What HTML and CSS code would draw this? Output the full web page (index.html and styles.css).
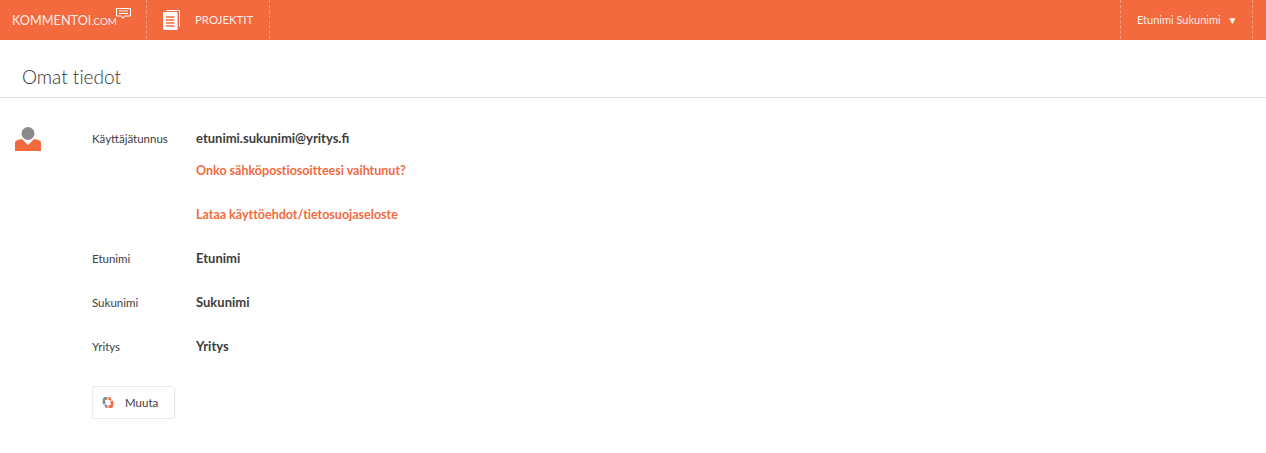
FILE: index.html
```html
<!DOCTYPE html>
<html lang="en">
<head>
    <meta charset="UTF-8">
    <title>Omat tiedot</title>
    <link rel="stylesheet" href="styles.css">
</head>
<body>

    <!-- Top bar -->
    <header class="topbar">
        <a class="logo" href="#">KOMMENTOI<span class="logo-small">.COM</span>
            <svg class="logo-bubble" width="15" height="12" viewBox="0 0 15 12">
                <path d="M0.5 0.5h14v7.5H8.5L7 10.5 5.5 8H0.5z" fill="none" stroke="#fff" stroke-width="1"/>
                <path d="M3 3h9M3 5.5h9" stroke="#fff" stroke-width="1"/>
            </svg>
        </a>
        <a class="nav-item" href="#">
            <svg class="nav-icon" width="17" height="20" viewBox="0 0 17 20">
                <path d="M3.5 0.5h13v16" fill="none" stroke="#fff" stroke-width="1"/>
                <rect x="0" y="2" width="14.5" height="18" rx="1" fill="#fff"/>
                <path d="M3 7h8.5M3 10h8.5M3 13h8.5M3 16h8.5" stroke="#f36a3f" stroke-width="1.6"/>
            </svg>
            PROJEKTIT
        </a>
        <a class="user-menu" href="#">Etunimi Sukunimi <span class="caret">▼</span></a>
    </header>

    <h1 class="page-title">Omat tiedot</h1>

    <main class="content">
        <svg class="user-icon" width="26" height="24" viewBox="0 0 26 24">
            <path d="M0 24V16q0-2.5 2.500-3l4.500-1 6 6 6-6 4.500 1q2.500 0.500 2.500 3v8z" fill="#f36a3f"/>
            <circle cx="13" cy="6.500" r="6.500" fill="#8a8a8a"/>
        </svg>

        <div class="details">
            <div class="row row-first">
                <div class="label">Käyttäjätunnus</div>
                <div class="value">
                    <div>etunimi.sukunimi@yritys.fi</div>
                    <a class="link link-change" href="#">Onko sähköpostiosoitteesi vaihtunut?</a>
                    <a class="link link-terms" href="#">Lataa käyttöehdot/tietosuojaseloste</a>
                </div>
            </div>
            <div class="row">
                <div class="label">Etunimi</div>
                <div class="value">Etunimi</div>
            </div>
            <div class="row">
                <div class="label">Sukunimi</div>
                <div class="value">Sukunimi</div>
            </div>
            <div class="row">
                <div class="label">Yritys</div>
                <div class="value">Yritys</div>
            </div>

            <button class="btn">
                <svg width="12" height="11" viewBox="0 0 12 11">
                    <path d="M5.500 0H3Q0.800 0 0.800 2.500V5H0L2 8 4 5H3.200V3.500Q3.200 2.800 4 2.800H5.500z" fill="#8a8a8a"/>
                    <path d="M2.500 8.500L4 6.500V8H5.500V11H4.500Q3 11 2.500 8.500z" fill="#8a8a8a"/>
                    <path d="M6.500 11H9Q11.200 11 11.200 8.500V6H12L10 3 8 6H8.800V7.500Q8.800 8.200 8 8.200H6.500z" fill="#f36a3f"/>
                    <path d="M9.500 2.500L8 4.500V3H6.500V0H7.500Q9 0 9.500 2.500z" fill="#f36a3f"/>
                </svg>
                Muuta
            </button>
        </div>
    </main>

</body>
</html>
```

FILE: styles.css
```css
body {
    margin: 0;
    font-family: Lato, "Open Sans", sans-serif;
    color: #3d3d3d;
    background-color: #fff;
}
a {
    text-decoration: none;
}
.topbar {
    display: flex;
    align-items: stretch;
    height: 40px;
    background-color: #f36a3f;
    font-size: 11px;
}
.topbar a {
    color: rgba(255, 255, 255, 0.9);
}
.logo {
    display: flex;
    align-items: center;
    width: 134px;
    padding-left: 12px;
    font-size: 12.7px;
}
.logo-small {
    font-size: 9.8px;
    margin-top: 2px;
}
.logo-bubble {
    margin: -13px 0 0 -1px;
}
.nav-item {
    display: flex;
    align-items: center;
    gap: 15px;
    width: 106px;
    padding-left: 16px;
    border-left: 1px dashed rgba(255, 255, 255, 0.35);
    border-right: 1px dashed rgba(255, 255, 255, 0.35);
    font-size: 11.4px;
    margin-bottom: 1px;
}
.user-menu {
    display: flex;
    align-items: center;
    margin-left: auto;
    margin-right: 13px;
    margin-bottom: 1px;
    padding: 0 16px;
    width: 99px;
    border-left: 1px dashed rgba(255, 255, 255, 0.35);
    border-right: 1px dashed rgba(255, 255, 255, 0.35);
    white-space: pre;
}
.caret {
    font-size: 10px;
    margin-left: 4px;
}
.page-title {
    margin: 0;
    padding: 26px 22px 9px;
    height: 22px;
    font-size: 19px;
    line-height: 22px;
    font-weight: 300;
    font-variant-ligatures: none;
    color: #333;
    border-bottom: 1px solid #e2e2e2;
}
.content {
    display: flex;
    padding: 29px 0 0 15px;
}
.user-icon {
    flex: none;
}
.details {
    margin-left: 51px;
}
.row {
    display: flex;
    height: 44px;
    font-size: 11.5px;
}
.row-first {
    height: 120px;
}
.label {
    width: 104px;
    line-height: 18px;
    margin-top: 3px;
}
.value {
    font-size: 13px;
    font-weight: 700;
    line-height: 18px;
    margin-top: 2px;
}
.link {
    display: block;
    font-size: 12.5px;
    font-variant-ligatures: none;
    color: #f36a3f;
}
.link-change {
    margin-top: 15px;
}
.link-terms {
    margin-top: 26px;
}
.btn {
    display: flex;
    align-items: center;
    gap: 11px;
    width: 83px;
    height: 33px;
    margin-top: 7px;
    padding: 0 9px;
    background-color: #fff;
    border: 1px solid #f0e8e5;
    border-radius: 3px;
    box-shadow: 0 1px 2px rgba(0, 0, 0, 0.06);
    font-family: inherit;
    font-size: 11.5px;
    color: #3d3d3d;
}
```
